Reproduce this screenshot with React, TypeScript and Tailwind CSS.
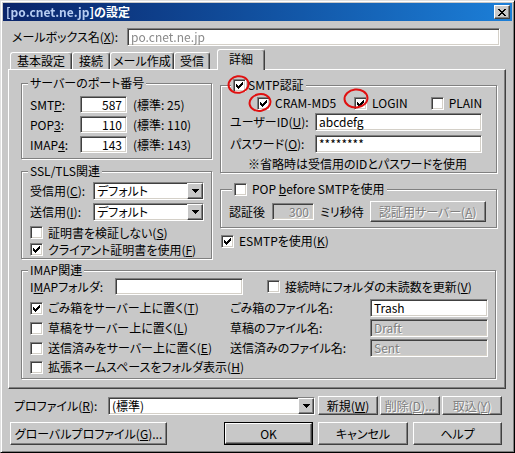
import React from 'react';

const sunken =
  'border border-t-[#808080] border-l-[#808080] border-r-white border-b-white shadow-[inset_1px_1px_#404040,inset_-1px_-1px_#d4d0c8]';
const raised =
  'border border-t-white border-l-white border-r-[#404040] border-b-[#404040] shadow-[inset_-1px_-1px_#808080]';
const grayText = 'text-[#808080] [text-shadow:1px_1px_0_#ffffff]';

function Check({ checked }: { checked?: boolean }) {
  return (
    <span className={`relative block w-[13px] h-[13px] shrink-0 bg-white ${sunken}`}>
      {checked && (
        <svg className="absolute left-0 top-0" width="11" height="11" viewBox="0 0 11 11" shapeRendering="crispEdges">
          {[
            [2, 4],
            [3, 5],
            [4, 6],
            [5, 5],
            [6, 4],
            [7, 3],
            [8, 2],
          ].map(([x, y]) => (
            <rect key={x} x={x} y={y} width="1" height="3" fill="#000" />
          ))}
        </svg>
      )}
    </span>
  );
}

function CheckRow({ checked, children, className = '' }: { checked?: boolean; children: React.ReactNode; className?: string }) {
  return (
    <div className={`flex items-center ${className}`}>
      <Check checked={checked} />
      <span className="ml-[5px] whitespace-nowrap">{children}</span>
    </div>
  );
}

function Group({
  legend,
  legendLeft = 'left-[6px]',
  className = '',
  children,
}: {
  legend: React.ReactNode;
  legendLeft?: string;
  className?: string;
  children: React.ReactNode;
}) {
  return (
    <div className={`relative border border-[#808080] shadow-[inset_1px_1px_#ffffff,1px_1px_#ffffff] ${className}`}>
      <div className={`absolute -top-[8px] ${legendLeft} h-[14px] px-[2px] flex items-center bg-[#c8c8c8] whitespace-nowrap`}>
        {legend}
      </div>
      {children}
    </div>
  );
}

function DropArrow() {
  return (
    <div className={`ml-auto w-[16px] h-full bg-[#c8c8c8] ${raised} flex items-center justify-center`}>
      <svg width="7" height="4" viewBox="0 0 7 4" shapeRendering="crispEdges">
        <path d="M0 0h7v1h-1v1h-1v1h-1v1h-1v-1h-1v-1h-1v-1h-1z" fill="#000" />
      </svg>
    </div>
  );
}

function Btn({
  className = '',
  children,
  disabled,
}: {
  className?: string;
  children: React.ReactNode;
  disabled?: boolean;
}) {
  return (
    <div className={`flex items-center justify-center bg-[#c8c8c8] whitespace-nowrap ${raised} ${disabled ? grayText : ''} ${className}`}>
      {children}
    </div>
  );
}

export default function App() {
  return (
    <div className="relative w-[515px] h-[453px] bg-[#c8c8c8] border border-t-[#e0e0e0] border-l-[#e0e0e0] border-r-black border-b-black shadow-[inset_1px_1px_#ffffff,inset_-1px_-1px_#808080] p-[2px] font-['Noto_Sans_CJK_JP',sans-serif] text-[12px] leading-none text-black [font-feature-settings:'palt'] overflow-hidden">
      {/* title bar */}
      <div className="h-[18px] flex items-center bg-linear-to-r from-[#0a246a] to-[#1c7fd8] pl-[3px] pr-[2px]">
        <span className="text-white font-bold whitespace-nowrap">
          <span className="blur-[0.7px] text-[#b7cdf2]">[po.cnet.ne.jp</span>]の設定
        </span>
        <div className={`ml-auto w-[16px] h-[14px] bg-[#c8c8c8] ${raised} flex items-center justify-center`}>
          <svg width="8" height="7" viewBox="0 0 8 7" shapeRendering="crispEdges">
            <path
              d="M0 0h2v1h1v1h2v-1h1v-1h2v1h-1v1h-1v1h-1v1h1v1h1v1h1v1h-2v-1h-1v-1h-2v1h-1v1h-2v-1h1v-1h1v-1h1v-1h-1v-1h-1v-1h-1z"
              fill="#000"
            />
          </svg>
        </div>
      </div>

      {/* mailbox name */}
      <div className="mt-[7px] flex items-center h-[18px] pl-[9px]">
        <span className="w-[115px] whitespace-nowrap">
          メールボックス名(<u>X</u>):
        </span>
        <div className={`w-[373px] h-[18px] bg-white ${sunken} flex items-center pl-[3px]`}>
          <span className="blur-[0.7px] text-[#8a8a8a]">po.cnet.ne.jp</span>
        </div>
      </div>

      {/* tabs */}
      <div className="mt-[3px] ml-[5px] flex items-end h-[20px] relative z-10">
        <div className="ml-[2px] flex items-end">
          {[
            ['基本設定', 'w-[62px]'],
            ['接続', 'w-[38px]'],
            ['メール作成', 'w-[64px]'],
            ['受信', 'w-[36px]'],
          ].map(([t, w]) => (
            <div
              key={t}
              className={`${w} h-[17px] flex items-center justify-center border-t border-l border-r border-t-white border-l-white border-r-[#404040] rounded-t-[3px] shadow-[inset_-1px_0_#808080] whitespace-nowrap`}
            >
              {t}
            </div>
          ))}
        </div>
        <div className="ml-[7px] w-[48px] h-[21px] -mb-[1px] flex items-center justify-center bg-[#c8c8c8] border-t border-l border-r border-t-white border-l-white border-r-[#404040] rounded-t-[3px] shadow-[inset_-1px_0_#808080] pb-[2px]">
          詳細
        </div>
      </div>

      {/* panel */}
      <div className={`ml-[5px] w-[498px] h-[320px] ${raised} pl-[12px]`}>
        <div className="flex">
          {/* left column */}
          <div className="w-[191px]">
            <Group legend="サーバーのポート番号" className="mt-[13px] h-[76px] pt-[12px] pl-[8px]">
              {[
                ['SMT', 'P', '587', '25'],
                ['POP', '3', '110', '110'],
                ['IMAP', '4', '143', '143'],
              ].map(([a, u, v, s], i) => (
                <div key={a} className={`flex items-center h-[17px] ${i ? 'mt-[3px]' : ''}`}>
                  <span className="w-[50px]">
                    {a}
                    <u>{u}</u>:
                  </span>
                  <div className={`w-[47px] h-[17px] bg-white ${sunken} flex items-center justify-end pr-[4px]`}>{v}</div>
                  <span className="ml-[6px] whitespace-nowrap">(標準: {s})</span>
                </div>
              ))}
            </Group>

            <Group legend="SSL/TLS関連" className="mt-[12px] h-[88px] pt-[10px] pl-[8px]">
              {[
                ['受信用(', 'C', '):'],
                ['送信用(', 'I', '):'],
              ].map(([a, u, b], i) => (
                <div key={a} className={`flex items-center h-[18px] ${i ? 'mt-[3px]' : ''}`}>
                  <span className="w-[63px] whitespace-nowrap">
                    {a}
                    <u>{u}</u>
                    {b}
                  </span>
                  <div className={`w-[111px] h-[18px] bg-white ${sunken} flex items-center pl-[3px]`}>
                    デフォルト
                    <DropArrow />
                  </div>
                </div>
              ))}
              <CheckRow className="mt-[3px] h-[17px]">
                証明書を検証しない(<u>S</u>)
              </CheckRow>
              <CheckRow checked className="h-[17px]">
                クライアント証明書を使用(<u>F</u>)
              </CheckRow>
            </Group>
          </div>

          {/* right column */}
          <div className="ml-[8px] w-[277px]">
            <Group
              legendLeft="left-[10px]"
              legend={
                <>
                  <Check checked />
                  <span className="ml-[2px]">SMTP認証</span>
                </>
              }
              className="mt-[15px] h-[88px] pt-[10px]"
            >
              <div className="flex items-center h-[14px]">
                <div className="ml-[36px]">
                  <CheckRow checked>CRAM-MD5</CheckRow>
                </div>
                <div className="ml-[18px]">
                  <CheckRow checked>LOGIN</CheckRow>
                </div>
                <div className="ml-[23px]">
                  <CheckRow>PLAIN</CheckRow>
                </div>
              </div>
              <div className="mt-[3px] flex items-center h-[18px] pl-[9px]">
                <span className="w-[85px] whitespace-nowrap">
                  ユーザーID(<u>U</u>):
                </span>
                <div className={`w-[167px] h-[18px] bg-white ${sunken} flex items-center pl-[3px]`}>abcdefg</div>
              </div>
              <div className="mt-[4px] flex items-center h-[18px] pl-[9px]">
                <span className="w-[85px] whitespace-nowrap">
                  パスワード(<u>O</u>):
                </span>
                <div className={`w-[167px] h-[18px] bg-white ${sunken} flex items-center pl-[3px]`}>********</div>
              </div>
              <div className="mt-[4px] h-[14px] flex items-center pl-[27px] whitespace-nowrap">
                ※省略時は受信用のIDとパスワードを使用
              </div>
            </Group>

            <Group
              legendLeft="left-[11px]"
              legend={
                <>
                  <Check />
                  <span className="ml-[5px]">
                    POP <u>b</u>efore SMTPを使用
                  </span>
                </>
              }
              className="mt-[16px] h-[39px] pt-[11px] pl-[8px]"
            >
              <div className="flex items-center h-[21px]">
                <span className="w-[43px]">認証後</span>
                <div className={`w-[42px] h-[17px] ${sunken} flex items-center justify-end pr-[4px] ${grayText}`}>300</div>
                <span className="ml-[6px] whitespace-nowrap">ミリ秒待</span>
                <Btn disabled className="ml-[6px] w-[116px] h-[21px]">
                  認証用サーバー(<u>A</u>)
                </Btn>
              </div>
            </Group>

            <CheckRow checked className="mt-[6px] ml-[1px] h-[14px]">
              ESMTPを使用(<u>K</u>)
            </CheckRow>
          </div>
        </div>

        <Group legend="IMAP関連" className="mt-[11px] w-[475px] h-[109px] pt-[7px] pl-[8px]">
          <div className="flex items-center h-[17px]">
            <span className="w-[85px] whitespace-nowrap">
              I<u>M</u>APフォルダ:
            </span>
            <div className={`w-[128px] h-[17px] bg-white ${sunken}`} />
            <CheckRow className="ml-[24px]">
              接続時にフォルダの未読数を更新(<u>V</u>)
            </CheckRow>
          </div>
          {[
            ['ごみ箱をサーバー上に置く(', 'T', true, 'ごみ箱のファイル名:', 'Trash', false],
            ['草稿をサーバー上に置く(', 'L', false, '草稿のファイル名:', 'Draft', true],
            ['送信済みをサーバー上に置く(', 'E', false, '送信済みのファイル名:', 'Sent', true],
          ].map(([a, u, c, l, v, d], i) => (
            <div key={String(u)} className={`flex items-center h-[18px] ${i ? 'mt-[2px]' : 'mt-[4px]'}`}>
              <CheckRow checked={c as boolean} className="w-[200px]">
                {a}
                <u>{u}</u>)
              </CheckRow>
              <span className="w-[140px] whitespace-nowrap">{l}</span>
              <div
                className={`w-[118px] h-[18px] ${sunken} flex items-center pl-[3px] ${d ? `bg-[#c8c8c8] ${grayText}` : 'bg-white'}`}
              >
                {v}
              </div>
            </div>
          ))}
          <CheckRow className="mt-[1px] h-[18px]">
            拡張ネームスペースをフォルダ表示(<u>H</u>)
          </CheckRow>
        </Group>
      </div>

      {/* profile row */}
      <div className="mt-[7px] flex items-center h-[19px] pl-[11px]">
        <span className="w-[94px] whitespace-nowrap">
          プロファイル(<u>R</u>):
        </span>
        <div className={`w-[207px] h-[18px] bg-white ${sunken} flex items-center pl-[3px]`}>
          (標準)
          <DropArrow />
        </div>
        <Btn className="ml-[3px] w-[60px] h-[19px]">
          新規(<u>W</u>)
        </Btn>
        <Btn disabled className="ml-[2px] w-[60px] h-[19px]">
          削除(<u>D</u>)...
        </Btn>
        <Btn disabled className="ml-[2px] w-[60px] h-[19px]">
          取込(<u>Y</u>)
        </Btn>
      </div>

      {/* buttons row */}
      <div className="mt-[7px] flex items-center h-[23px] pl-[7px]">
        <Btn className="w-[157px] h-[23px]">
          グローバルプロファイル(<u>G</u>)...
        </Btn>
        <div className="ml-[57px] w-[89px] h-[23px] border border-black">
          <Btn className="w-full h-full">OK</Btn>
        </div>
        <Btn className="ml-[5px] w-[90px] h-[23px]">キャンセル</Btn>
        <Btn className="ml-[5px] w-[89px] h-[23px]">ヘルプ</Btn>
      </div>

      {/* red annotation circles */}
      <svg className="absolute left-0 top-0 pointer-events-none" width="515" height="453" viewBox="0 0 515 453">
        <g fill="none" stroke="#e01010" strokeWidth="2">
          <ellipse cx="237.5" cy="83.5" rx="10" ry="8.3" transform="rotate(-8 237.5 83.5)" />
          <ellipse cx="259" cy="101.5" rx="10.5" ry="8.3" transform="rotate(-10 259 101.5)" />
          <ellipse cx="355" cy="97.5" rx="11.5" ry="9" transform="rotate(-6 355 97.5)" />
        </g>
      </svg>
    </div>
  );
}
